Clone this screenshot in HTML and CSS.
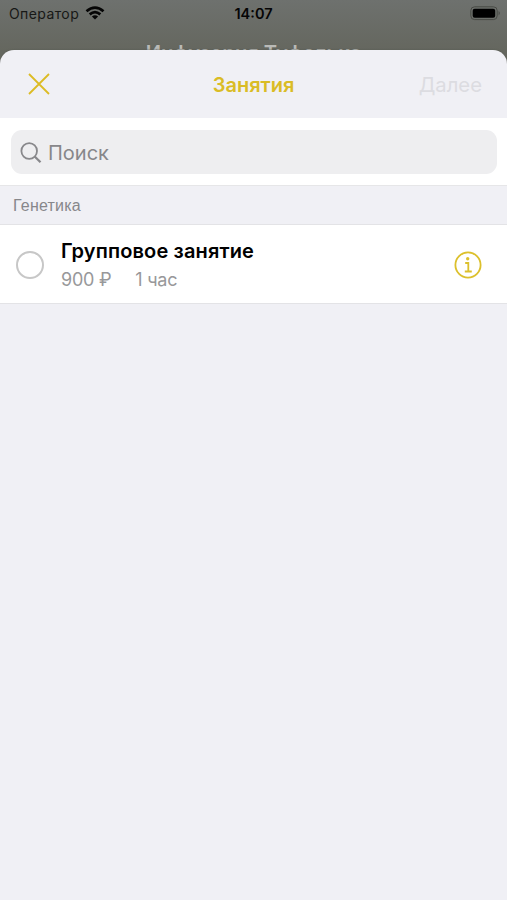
FILE: index.html
```html
<!DOCTYPE html>
<html lang="ru">
<head>
<meta charset="utf-8">
<title>Занятия</title>
<link rel="stylesheet" href="styles.css">
</head>
<body>
<div class="screen">
  <div class="backdrop">
    <div class="status">
      <div class="carrier"><span>Оператор</span>
        <svg width="20" height="14" viewBox="0 0 20 14"><g fill="none" stroke="#050505" stroke-width="2.7"><path d="M1.500 5.200Q10-2.100 18.500 5.200"/><path d="M4.700 8.400Q10 3.900 15.300 8.400"/></g><path d="M6.900 10.500Q10 8.100 13.100 10.500L10 13.600Z" fill="#050505"/></svg>
      </div>
      <span class="clock">14:07</span>
      <svg class="battery" width="31" height="15" viewBox="0 0 31 15"><rect x=".8" y=".8" width="26.400" height="12.800" rx="3.800" fill="none" stroke="#484a45" stroke-width="1"/><rect x="2.700" y="2.700" width="22.500" height="9" rx="2" fill="#000"/><path d="M28.600 5Q31 7.200 28.600 9.400Z" fill="#484a45"/></svg>
    </div>
    <div class="behind">Инфузория Туфелька</div>
  </div>
  <main class="sheet">
    <header class="nav">
      <svg width="22" height="22" viewBox="0 0 22 22"><path d="M1 1L21 21M21 1L1 21" stroke="#dcbb24" stroke-width="1.800" fill="none"/></svg>
      <h1>Занятия</h1>
      <span class="next">Далее</span>
    </header>
    <div class="searchbar">
      <div class="field">
        <svg width="22" height="22" viewBox="0 0 22 22"><circle cx="9.200" cy="9" r="7.800" fill="none" stroke="#88888b" stroke-width="1.800"/><path d="M14.700 14.500L20.500 20.200" stroke="#88888b" stroke-width="2.300"/></svg>
        <span class="placeholder">Поиск</span>
      </div>
    </div>
    <div class="section"><span>Генетика</span></div>
    <div class="row">
      <span class="radio"></span>
      <div class="info">
        <div class="name"><span>Групповое занятие</span></div>
        <div class="meta"><span class="price">900 ₽</span><span class="time">1 час</span></div>
      </div>
      <svg width="28" height="28" viewBox="0 0 28 28"><circle cx="14" cy="14" r="12.600" fill="none" stroke="#dcc02c" stroke-width="1.800"/><circle cx="13.700" cy="7.800" r="1.700" fill="#dcc02c"/><path d="M11.200 12H14.300V20.500M10.800 20.500H17.800" fill="none" stroke="#dcc02c" stroke-width="1.800"/></svg>
    </div>
  </main>
</div>
</body>
</html>
```
FILE: styles.css
```css
* { box-sizing: border-box; }
body { margin: 0; font-family: Inter, "Liberation Sans", sans-serif; }
svg { display: block; flex: none; }
.screen { width: 507px; height: 900px; overflow: hidden; display: flex; flex-direction: column; background: #65675f; }
.backdrop { height: 50px; flex: none; overflow: hidden; background: linear-gradient(#6e716e, #65675f); }
.status { height: 26px; display: grid; grid-template-columns: 1fr auto 1fr; align-items: center; padding: 0 6px; }
.carrier { display: flex; align-items: center; gap: 6px; padding-left: 3px; font-size: 14px; letter-spacing: .4px; color: #171816; }
.clock { padding-top: 1px; font-size: 14.500px; font-weight: 600; color: #050505; }
.battery { justify-self: end; }
.behind { margin-top: 13px; text-align: center; font-size: 20.200px; line-height: 28px; font-weight: 600; color: #b9bab7; white-space: nowrap; }
.sheet { flex: 1; background: #f0f0f5; border-radius: 14px 14px 0 0; overflow: hidden; box-shadow: 0 0 2px #555750; }
.nav { height: 68px; display: grid; grid-template-columns: 1fr auto 1fr; align-items: center; padding: 0 25px 0 28px; }
.nav h1 { margin: 0 3px 0 0; padding-top: 1px; font-size: 20px; font-weight: 600; color: #dabc25; }
.next { justify-self: end; padding-top: 1px; font-size: 20.300px; color: #dcdce1; }
.searchbar { height: 68px; padding: 12px 10px 11px 11px; background: #fff; border-bottom: 1px solid #e6e6e8; }
.field { height: 44px; border-radius: 11px; background: #eeeef0; display: flex; align-items: center; gap: 6px; padding: 1px 9px 0; }
.placeholder { padding-top: 1px; font-size: 20px; color: #87878a; }
.section { height: 39px; display: flex; align-items: center; padding: 2px 13px 0; border-bottom: 1px solid #e3e3e6; font: 16px "Liberation Sans", sans-serif; letter-spacing: .2px; color: #87878b; }
.row { height: 79px; display: flex; align-items: center; padding: 2px 25px 0 16px; background: #fff; border-bottom: 1px solid #e3e3e6; }
.radio { width: 28px; height: 28px; border: 2px solid #c7c7c7; border-radius: 50%; }
.info { flex: 1; padding-left: 17px; }
.name { font-size: 20px; letter-spacing: .13px; line-height: 28px; font-weight: 600; color: #000; }
.meta { display: flex; gap: 24px; padding-top: 1px; font-size: 18px; letter-spacing: -.25px; line-height: 28px; color: #98989a; }
```
